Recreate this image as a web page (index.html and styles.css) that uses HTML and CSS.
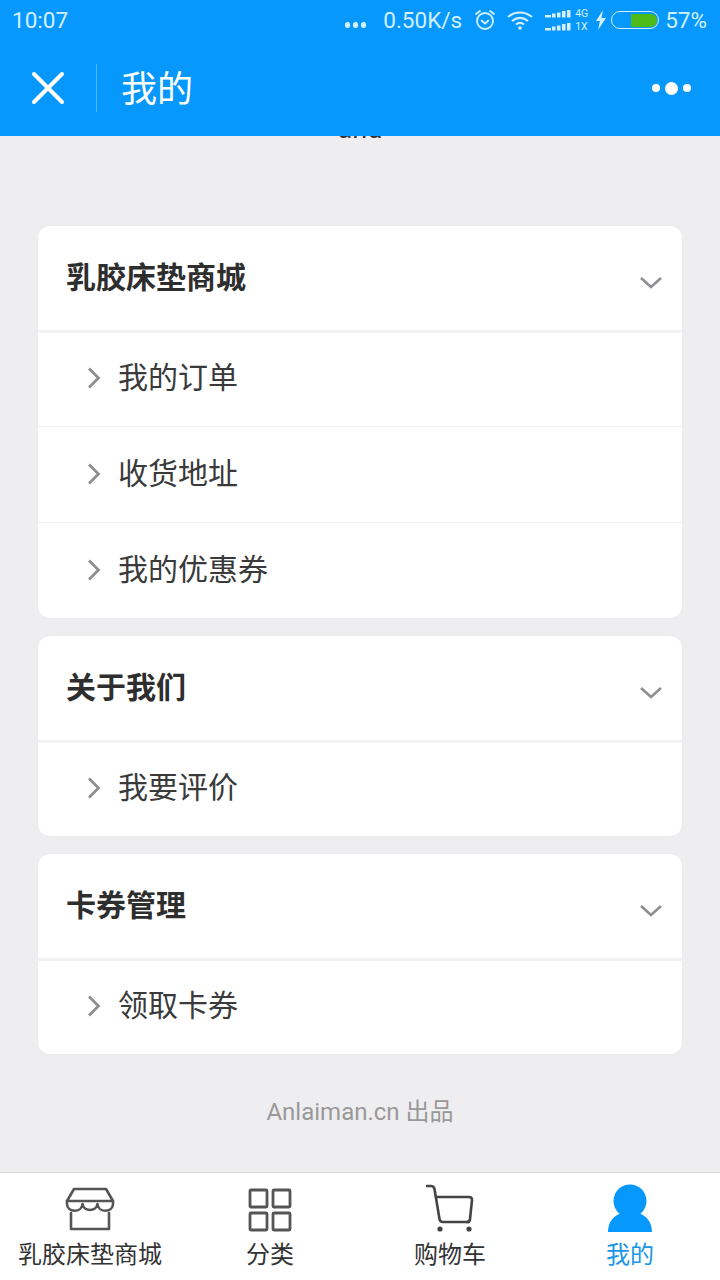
FILE: index.html
```html
<!DOCTYPE html>
<html lang="zh-CN">
<head>
    <meta charset="UTF-8">
    <meta name="viewport" content="width=device-width, initial-scale=1.0">
    <title>我的</title>
    <link rel="stylesheet" href="styles.css">
</head>
<body>
    <div class="app">
        <header class="topbar">
            <div class="status-bar">
                <span class="time">10:07</span>
                <div class="status-right">
                    <span class="dots"><i></i><i></i><i></i></span>
                    <span class="speed">0.50K/s</span>
                    <svg class="ic-alarm" width="24" height="22" viewBox="0 0 24 22" fill="none" stroke="#d4f0ff" stroke-width="1.8" stroke-linecap="round">
                        <circle cx="12" cy="12" r="8"/>
                        <path d="M8.5 11.5l3.5 3 3.5-3"/>
                        <path d="M3 5l4-3M21 5l-4-3"/>
                    </svg>
                    <svg class="ic-wifi" width="28" height="20" viewBox="0 0 28 20" fill="none" stroke="#d4f0ff" stroke-width="2.2">
                        <path d="M2 7c7-6 17-6 24 0"/>
                        <path d="M6 11c5-4 11-4 16 0"/>
                        <path d="M10 14.500c2.500-2 5.500-2 8 0"/>
                        <circle cx="14" cy="18" r="1.800" fill="#d4f0ff" stroke="none"/>
                    </svg>
                    <svg class="ic-signal" width="26" height="22" viewBox="0 0 26 22" fill="#d4f0ff">
                        <rect x="0" y="6" width="6" height="2.500"/><rect x="7" y="4.500" width="3.500" height="4"/><rect x="12" y="3.500" width="3.500" height="5"/><rect x="17" y="2" width="3.500" height="6.500"/><rect x="22" y="1" width="3.500" height="7.500"/>
                        <rect x="0" y="19" width="6" height="2.500"/><rect x="7" y="17.500" width="3.500" height="4"/><rect x="12" y="16.500" width="3.500" height="5"/><rect x="17" y="15" width="3.500" height="6.500"/><rect x="22" y="14" width="3.500" height="7.500"/>
                    </svg>
                    <span class="net"><span>4G</span><span>1X</span></span>
                    <svg class="ic-bolt" width="12" height="20" viewBox="0 0 12 20" fill="#d4f0ff">
                        <path d="M8 0L1 11h4l-2 9 8-12H6.500z"/>
                    </svg>
                    <span class="battery"><span class="battery-level"></span></span>
                    <span class="percent">57%</span>
                </div>
            </div>
            <div class="navbar">
                <button class="close-btn" aria-label="关闭">
                    <svg width="34" height="34" viewBox="0 0 34 34" stroke="#fff" stroke-width="4" stroke-linecap="round">
                        <path d="M3 3l28 28M31 3L3 31"/>
                    </svg>
                </button>
                <h1 class="nav-title">我的</h1>
                <div class="more"><i></i><i class="big"></i><i></i></div>
            </div>
        </header>

        <main class="content">
            <p class="cut-text">and</p>

            <section class="card">
                <div class="card-head">
                    <h2>乳胶床垫商城</h2>
                    <svg class="arrow-down" width="22" height="14" viewBox="0 0 22 14" fill="none" stroke="#8e8e93" stroke-width="2.600"><path d="M1 2l10 9 10-9"/></svg>
                </div>
                <a class="row"><svg class="arrow-right" width="14" height="24" viewBox="0 0 14 24" fill="none" stroke="#8e8e93" stroke-width="2.800"><path d="M2 2.500l9.500 9.500L2 21.500"/></svg><span>我的订单</span></a>
                <a class="row"><svg class="arrow-right" width="14" height="24" viewBox="0 0 14 24" fill="none" stroke="#8e8e93" stroke-width="2.800"><path d="M2 2.500l9.500 9.500L2 21.500"/></svg><span>收货地址</span></a>
                <a class="row"><svg class="arrow-right" width="14" height="24" viewBox="0 0 14 24" fill="none" stroke="#8e8e93" stroke-width="2.800"><path d="M2 2.500l9.500 9.500L2 21.500"/></svg><span>我的优惠券</span></a>
            </section>

            <section class="card">
                <div class="card-head">
                    <h2>关于我们</h2>
                    <svg class="arrow-down" width="22" height="14" viewBox="0 0 22 14" fill="none" stroke="#8e8e93" stroke-width="2.600"><path d="M1 2l10 9 10-9"/></svg>
                </div>
                <a class="row"><svg class="arrow-right" width="14" height="24" viewBox="0 0 14 24" fill="none" stroke="#8e8e93" stroke-width="2.800"><path d="M2 2.500l9.500 9.500L2 21.500"/></svg><span>我要评价</span></a>
            </section>

            <section class="card">
                <div class="card-head">
                    <h2>卡券管理</h2>
                    <svg class="arrow-down" width="22" height="14" viewBox="0 0 22 14" fill="none" stroke="#8e8e93" stroke-width="2.600"><path d="M1 2l10 9 10-9"/></svg>
                </div>
                <a class="row"><svg class="arrow-right" width="14" height="24" viewBox="0 0 14 24" fill="none" stroke="#8e8e93" stroke-width="2.800"><path d="M2 2.500l9.500 9.500L2 21.500"/></svg><span>领取卡券</span></a>
            </section>

            <p class="made-by">Anlaiman.cn 出品</p>
        </main>

        <nav class="tabbar">
            <a class="tab">
                <svg width="50" height="46" viewBox="0 0 50 46" fill="none" stroke="#555" stroke-width="2.600" stroke-linejoin="round" stroke-linecap="round">
                    <path d="M9 3h32l7 12H2z"/>
                    <path d="M2 15v3c0 9 15 9 15.500 0 1 8 14 8 15 0 .5 9 15.500 9 15.500 0v-3"/>
                    <path d="M6 27v16h38V27"/>
                </svg>
                <span>乳胶床垫商城</span>
            </a>
            <a class="tab">
                <svg width="44" height="44" viewBox="0 0 44 44" fill="none" stroke="#555" stroke-width="2.800" stroke-linejoin="round">
                    <rect x="2" y="2" width="17" height="17" rx="1"/><rect x="25" y="2" width="17" height="17" rx="1"/>
                    <rect x="2" y="25" width="17" height="17" rx="1"/><rect x="25" y="25" width="17" height="17" rx="1"/>
                </svg>
                <span>分类</span>
            </a>
            <a class="tab">
                <svg width="50" height="48" viewBox="0 0 50 48" fill="none" stroke="#444" stroke-width="2.600" stroke-linejoin="round" stroke-linecap="round">
                    <path d="M2 2h4c2 0 3 1 3.500 3l5 30c.3 2 1.500 3 3.500 3h26"/>
                    <path d="M11 13h33c2 0 3 1 3 3l-2 19c-.2 2-1 3-3 3"/>
                    <circle cx="15" cy="45" r="2.600" fill="#444" stroke="none"/>
                    <circle cx="44" cy="45" r="2.600" fill="#444" stroke="none"/>
                </svg>
                <span>购物车</span>
            </a>
            <a class="tab active">
                <svg width="44" height="48" viewBox="0 0 44 48" fill="#0798fe">
                    <circle cx="22" cy="17" r="16.500"/>
                    <path d="M0 48c0-10 6-17 14-19 5 3 11 3 16 0 8 2 14 9 14 19z"/>
                </svg>
                <span>我的</span>
            </a>
        </nav>
    </div>
</body>
</html>
```

FILE: styles.css
```css
* {
    box-sizing: border-box;
    margin: 0;
    padding: 0;
    font-family: Roboto, 'Noto Sans CJK SC', sans-serif;
}

body {
    background: #eeedf0;
}

.app {
    width: 720px;
    height: 1280px;
    display: flex;
    flex-direction: column;
    overflow: hidden;
}

.topbar {
    height: 136px;
    background: #0798fe;
    flex-shrink: 0;
    position: relative;
    z-index: 1;
}

.status-bar {
    height: 40px;
    display: flex;
    justify-content: space-between;
    align-items: center;
    padding: 0 13px 0 12px;
    color: #d4f0ff;
}

.time {
    font-size: 22.500px;
}

.status-right {
    display: flex;
    align-items: center;
}

.dots {
    display: flex;
    gap: 2.500px;
    margin-top: 10px;
    margin-right: 17px;
}

.dots i {
    width: 5.500px;
    height: 5.500px;
    border-radius: 50%;
    background: #d4f0ff;
}

.speed {
    font-size: 22.500px;
    margin-right: 11px;
}

.ic-alarm {
    margin-right: 9px;
}

.ic-wifi {
    margin-right: 11px;
}

.net {
    display: flex;
    flex-direction: column;
    font-size: 10.500px;
    line-height: 13px;
    margin-left: 4px;
    margin-right: 7px;
}

.ic-bolt {
    margin-right: 4px;
}

.battery {
    width: 48px;
    height: 18px;
    border: 1.500px solid #d4f0ff;
    border-radius: 9px;
    padding: 1.500px;
    display: flex;
    justify-content: flex-end;
    margin-right: 6px;
}

.battery-level {
    width: 26px;
    background: #4cbb17;
    border-radius: 1px 6px 6px 1px;
}

.percent {
    font-size: 22.500px;
}

.navbar {
    height: 96px;
    display: flex;
    align-items: center;
}

.close-btn {
    width: 97px;
    height: 48px;
    background: none;
    border: none;
    border-right: 1px solid rgba(255, 255, 255, 0.3);
    display: flex;
    align-items: center;
    padding-left: 31px;
}

.nav-title {
    flex: 1;
    margin-left: 24px;
    margin-bottom: 4px;
    font-size: 36px;
    font-weight: 400;
    color: #fff;
}

.more {
    display: flex;
    align-items: center;
    gap: 5px;
    margin-right: 29px;
}

.more i {
    width: 8px;
    height: 8px;
    border-radius: 50%;
    background: #fff;
}

.more i.big {
    width: 13px;
    height: 13px;
}

.content {
    flex: 1;
    overflow: hidden;
    padding: 0 38px;
}

.cut-text {
    height: 113px;
    margin-top: -23px;
    text-align: center;
    font-size: 27px;
    line-height: 32px;
    color: #333;
}

.card {
    background: #fff;
    border-radius: 12px;
    margin-bottom: 18px;
    box-shadow: 0 0 2px rgba(0, 0, 0, 0.03);
    overflow: hidden;
}

.card-head {
    height: 107px;
    margin-bottom: -2px;
    padding: 0 20px 0 28px;
    display: flex;
    justify-content: space-between;
    align-items: center;
    border-bottom: 3px solid #f2f2f4;
}

.card-head h2 {
    font-size: 30px;
    font-weight: 700;
    color: #2e2e2e;
    margin-bottom: 6px;
}

.arrow-down {
    margin-top: 9px;
}

.row {
    height: 96px;
    display: flex;
    align-items: center;
    padding-left: 49px;
    font-size: 30px;
    color: #3a3a3a;
    border-bottom: 1px solid #f0f0f2;
}

.row:last-child {
    height: 95px;
    border-bottom: none;
}

.row span {
    margin-bottom: 7px;
}

.arrow-right {
    margin-right: 17px;
    margin-bottom: 2px;
}

.made-by {
    text-align: center;
    margin-top: 38px;
    font-size: 24px;
    color: #999;
}

.tabbar {
    height: 108px;
    flex-shrink: 0;
    background: #fff;
    border-top: 1px solid #d9d9dc;
    display: flex;
}

.tab {
    flex: 1;
    display: flex;
    flex-direction: column;
    align-items: center;
    justify-content: flex-end;
    gap: 7px;
    padding-bottom: 9px;
    font-size: 24px;
    line-height: 32px;
    color: #333;
}

.tab.active {
    color: #1a96e8;
}
```
